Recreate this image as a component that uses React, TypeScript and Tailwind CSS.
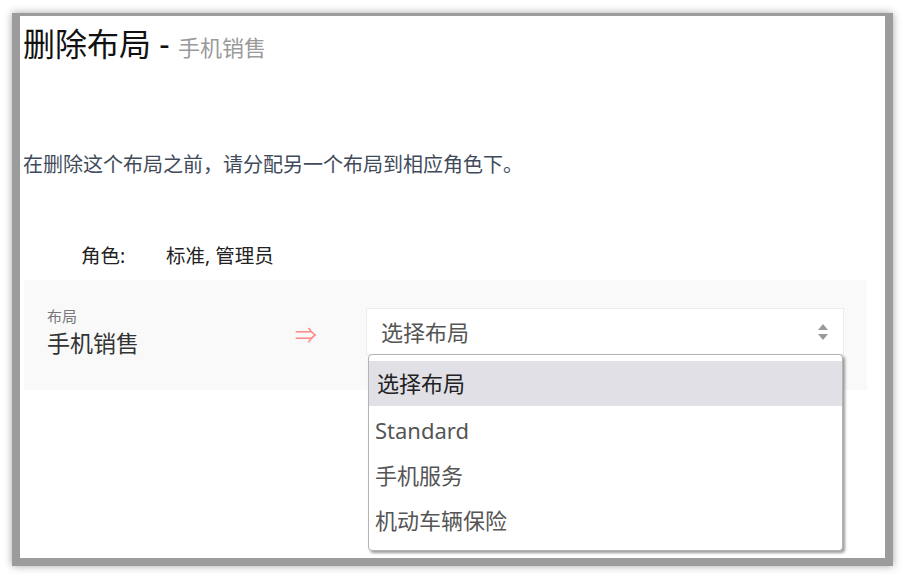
const options = ["选择布局", "Standard", "手机服务", "机动车辆保险"]

function SortIcon() {
	return (
		<svg width="12" height="18" viewBox="0 0 12 18" className="text-[#9a9a9a]">
			<path d="M6 1 L11 7 H1 Z" fill="currentColor" />
			<path d="M6 17 L11 11 H1 Z" fill="currentColor" />
		</svg>
	)
}

export default function App() {
	return (
		<div className="w-[905px] h-[576px] bg-white overflow-hidden font-['Noto_Sans','Noto_Sans_CJK_SC',sans-serif]">
			<div className="ml-[12px] mt-[13px] w-[881px] h-[553px] border-[#9c9c9c] border-t-[3px] border-l-[8px] border-r-[8px] border-b-[8px] shadow-[0_0_8px_rgba(0,0,0,0.35)]">
				<div className="h-full bg-white pr-[18px]">
					<h1 className="pt-[9px] pl-[3px] leading-[38px] text-[32px] text-[#111]">
						删除布局 -{" "}
						<span className="text-[22px] text-[#9a9a9a]">手机销售</span>
					</h1>

					<p className="mt-[85px] pl-[3px] text-[20px] leading-[28px] text-[#3f4b5b]">
						在删除这个布局之前，请分配另一个布局到相应角色下。
					</p>

					<div className="mt-[64px] flex text-[19.5px] leading-[26px] text-[#222]">
						<span className="ml-[61px] w-[85px]">角色:</span>
						<span>标准, 管理员</span>
					</div>

					<div className="mt-[11px] ml-[4px] h-[110px] bg-[#f9f9f9] flex items-start">
						<div className="pl-[23px] pt-[27px] w-[271px]">
							<div className="text-[15px] leading-[18px] text-[#777]">布局</div>
							<div className="text-[23px] leading-[30px] text-[#333] mt-[3px]">手机销售</div>
						</div>
						<div className="pt-[41px] w-[71px] text-[22px] leading-[26px] text-[#ff8a8a]">⇒</div>
						<div className="relative mt-[28px]">
							<div className="w-[478px] h-[47px] bg-white border border-[#ececec] flex items-center justify-between pl-[14px] pr-[14px]">
								<span className="text-[22px] text-[#555] leading-[30px]">选择布局</span>
								<SortIcon />
							</div>
							<div className="absolute left-[2px] top-[46px] w-[475px] bg-white border border-[#b4b4b4] rounded-[4px] shadow-[2px_2px_3px_rgba(0,0,0,0.4)] pt-[6px] pb-[9px]">
								{options.map((o, i) => (
									<div
										key={o}
										className={
											i === 0
												? "h-[45px] flex items-center pl-[8px] text-[22px] bg-[#e1e0e6] text-[#222]"
												: "h-[45px] flex items-center pl-[6px] pt-[4px] text-[22px] text-[#555]"
										}
									>
										{o}
									</div>
								))}
							</div>
						</div>
					</div>
				</div>
			</div>
		</div>
	)
}
